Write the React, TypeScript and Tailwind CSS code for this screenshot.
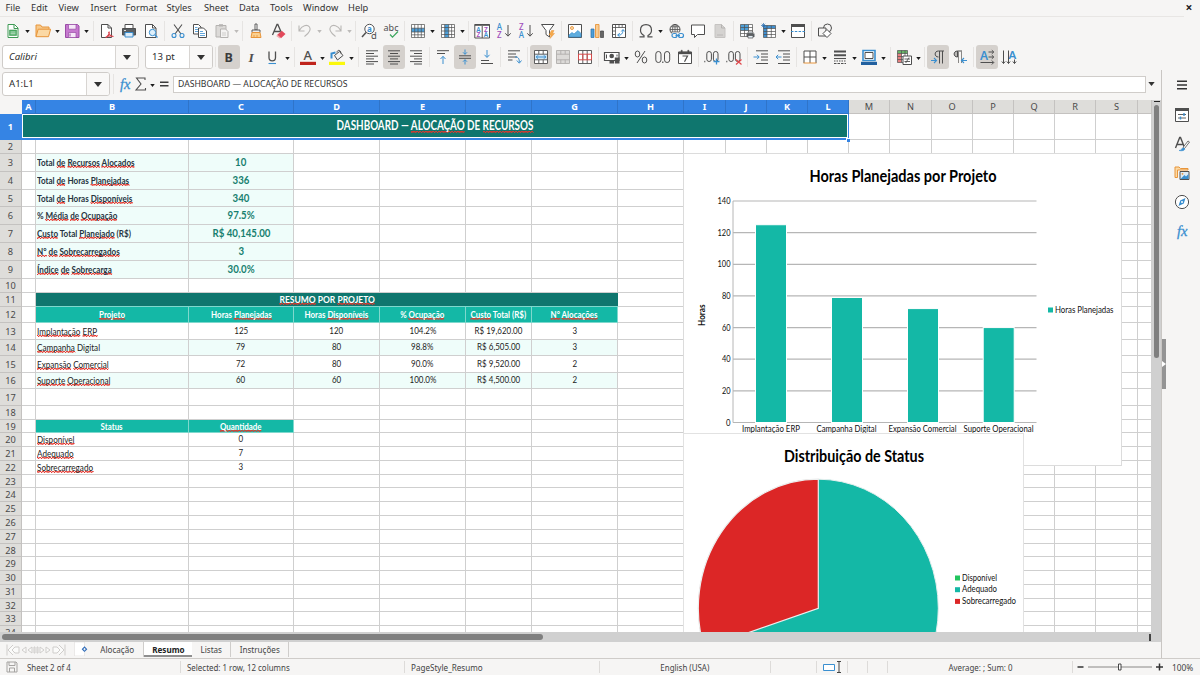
import React from "react";

const UI = "font-['Noto_Sans',sans-serif]";
const CELL = "font-['Lato',sans-serif]";
const G = "#4f4f4f";
const B = "#3a8fd0";
const O = "#e8953a";

/* ---------- icons ---------- */

const icons: Record<string, React.ReactNode> = {
  newDoc: (
    <>
      <path d="M3 1.500h6.500L13 5v9.500H3z" fill="#fff" stroke="#3f9a55" />
      <path d="M9 1.500V5.500h4" stroke="#3f9a55" />
      <path d="M4.500 7h7v5.500h-7z" fill="#4bab63" stroke="#3f9a55" strokeWidth=".6" />
      <path d="M5.500 9h5M5.500 10.800h5" stroke="#fff" strokeWidth=".7" />
    </>
  ),
  open: (
    <>
      <path d="M1 13.500V2h4.500l1.500 2h7v2.500" fill="#f7c98a" stroke={O} />
      <path d="M1 13.700 3.200 6.200H15.600L13.500 13.700z" fill="#fbd9a5" stroke={O} />
    </>
  ),
  save: (
    <>
      <path d="M1.500 1.500h12l1.500 1.500v11.500H1.500z" fill="#c678cf" stroke="#9a4da6" />
      <path d="M4.500 1.500h7.500v4.700H4.500z" fill="#f6e8f8" stroke="#9a4da6" strokeWidth=".7" />
      <path d="M4.500 9.500h7.500v5H4.500z" fill="#f6e8f8" stroke="#9a4da6" strokeWidth=".7" />
      <path d="M6 10.500v3" stroke="#9a4da6" />
    </>
  ),
  pdf: (
    <>
      <path d="M2.500 1.500h6.500L12.500 5v9.500h-10z" fill="#fff" stroke={G} />
      <path d="M9 1.500V5h3.500" stroke={G} />
      <path d="M7 14.500c2.500-2 3.500-4.500 3.200-6M9.500 9c.5 2.500 2 4 5 4.500M6.500 14.500c2-1.500 5-2 8-1" stroke="#d9404a" strokeWidth="1.100" />
    </>
  ),
  print: (
    <>
      <path d="M4 1.500h8v4H4z" fill="#fff" stroke={G} />
      <path d="M1.500 5.500h13v6.500h-13z" fill="#5a5f63" stroke={G} />
      <path d="M4 9.500h8V14H4z" fill="#dcebf7" stroke={B} />
      <path d="M3 7.500h2" stroke="#fff" strokeWidth=".8" />
    </>
  ),
  preview: (
    <>
      <path d="M2.500 1.500h7L13 5v9.500H2.500z" fill="#fff" stroke={G} />
      <path d="M9.500 1.500V5H13" stroke={G} />
      <circle cx="9.500" cy="9.500" r="3.200" fill="#dff0fb" stroke={B} />
      <path d="m12 12 2.500 2.500" stroke={B} strokeWidth="1.300" />
    </>
  ),
  cut: (
    <>
      <path d="M4 1.500 11 11M12 1.500 5 11" stroke={G} strokeWidth="1.100" />
      <circle cx="4" cy="12.500" r="2" stroke={B} strokeWidth="1.100" />
      <circle cx="12" cy="12.500" r="2" stroke={B} strokeWidth="1.100" />
    </>
  ),
  copy: (
    <>
      <path d="M1.500 1.500h5L9 4v7H1.500z" fill="#fff" stroke={G} />
      <path d="M3 4.500h2.500M3 6.500h3M3 8.500h3" stroke={B} strokeWidth=".8" />
      <path d="M6.500 5h5L14.500 8v6.500h-8z" fill="#fff" stroke={G} />
      <path d="M8 8.500h3M8 10.500h5M8 12.500h5" stroke={B} strokeWidth=".8" />
    </>
  ),
  paste: (
    <>
      <path d="M2 2.500h10V14H2z" fill="#dcdad8" stroke="#b5b3b1" />
      <path d="M5 1.200h4v2.300H5z" fill="#b5b3b1" />
      <path d="M6.500 6h5L14 8.500v6H6.500z" fill="#f4f3f2" stroke="#b5b3b1" />
      <path d="M8 10h4M8 12h4" stroke="#c5c3c1" strokeWidth=".8" />
    </>
  ),
  clone: (
    <>
      <path d="M7 1h2v6H7z" fill="#fff" stroke={G} strokeWidth=".9" />
      <path d="M4 7h8v2.500H4z" fill="#ececec" stroke={G} strokeWidth=".9" />
      <path d="M4 9.500h8l1 5H3z" fill="#fbd08f" stroke={O} />
      <path d="M6 14.500V12M9 14.500V12" stroke={O} strokeWidth=".8" />
    </>
  ),
  clear: (
    <>
      <path d="M2.500 12 7 1.500h.8L12 11M4 8.500h6" stroke={G} strokeWidth="1.300" />
      <path d="m7 12 4.800-4.300L15.500 11 11 15.200z" fill="#e2495b" />
      <path d="M6.200 12.900 7.500 11.800l3.200 2.900-1 .9z" fill="#f3a8ae" />
    </>
  ),
  undo: <path d="M2 2.500v5.500h5.500M2.300 7.500C5 2.500 10 1 12.500 4c2 3-1 6.500-5 9.500" stroke="#b9b7b5" strokeWidth="1.100" />,
  redo: <path d="M14 2.500v5.500H8.500M13.700 7.500C11 2.500 6 1 3.500 4c-2 3 1 6.500 5 9.500" stroke="#b9b7b5" strokeWidth="1.100" />,
  find: (
    <>
      <circle cx="8.500" cy="6" r="4.700" fill="#fff" stroke={G} />
      <path d="M5 9.500 1 14" stroke={G} strokeWidth="1.500" />
      <text x="6" y="8.500" fontSize="8" fontWeight="700" fill={B} fontFamily="Noto Sans">a</text>
      <text x="10" y="15.500" fontSize="9.500" fill={G} fontFamily="Noto Sans" stroke="#f6f5f4" strokeWidth="1.500" paintOrder="stroke">d</text>
    </>
  ),
  spell: (
    <>
      <text x=".5" y="7.500" fontSize="9" textLength="15" fill={G} fontFamily="Noto Sans">abc</text>
      <path d="m7 11.500 2.500 2.700L15 8.500" stroke="#3ba55d" strokeWidth="1.200" />
    </>
  ),
  row: (
    <>
      <path d="M1.500 1.500h13v13h-13z" fill="#fff" />
      <path d="M1.500 5.200h13V9h-13z" fill="#4d9fd8" />
      <path d="M1.500 1.500h13v13h-13zM1.500 5.200h13M1.500 9h13M1.500 11.800h13M4.700 1.500v13M8 1.500v13M11.300 1.500v13" stroke={G} strokeWidth=".7" />
    </>
  ),
  col: (
    <>
      <path d="M1.500 1.500h13v13h-13z" fill="#fff" />
      <path d="M4.700 1.500h4v13h-4z" fill="#4d9fd8" />
      <path d="M1.500 1.500h13v13h-13zM1.500 4.500h13M1.500 8h13M1.500 11.500h13M4.700 1.500v13M8.700 1.500v13M11.600 1.500v13" stroke={G} strokeWidth=".7" />
    </>
  ),
  sort: (
    <>
      <path d="M.8 1.500h14.700v13.500H.8z" fill="#fff" stroke={G} />
      <path d="M.8 1h14.700v1.800H.8z" fill={G} />
      <path d="M8.200 3v12" stroke={G} />
      <g fontFamily="Noto Sans" fontSize="6.500" fontWeight="600">
        <text x="2.300" y="8.500" fill={B}>A</text>
        <text x="2.600" y="14.300" fill="#a04dbb">Z</text>
        <text x="10" y="8.500" fill="#a04dbb">Z</text>
        <text x="9.700" y="14.300" fill={B}>A</text>
      </g>
    </>
  ),
  az: (
    <>
      <g fontFamily="Noto Sans" fontSize="8" fontWeight="500">
        <text x=".8" y="6.800" fill={B}>A</text>
        <text x="1" y="15" fill="#a04dbb">Z</text>
      </g>
      <path d="M12 2v11M9.300 10.300 12 13.200l2.700-2.900" stroke={G} />
    </>
  ),
  za: (
    <>
      <g fontFamily="Noto Sans" fontSize="8" fontWeight="500">
        <text x="1" y="6.800" fill="#a04dbb">Z</text>
        <text x=".8" y="15" fill={B}>A</text>
      </g>
      <path d="M12 2v11M9.300 10.300 12 13.200l2.700-2.900" stroke={G} />
    </>
  ),
  filter: (
    <>
      <path d="M1.500 1.500h12.500L9.500 7.500v6.500L6 11.500v-4z" fill="#fff" stroke={G} />
      <path d="m11.500 7.500-2.500 4.500h2l-1 3.500 4.500-5h-2l1.500-3z" fill="#f5a94a" stroke={O} strokeWidth=".5" />
    </>
  ),
  image: (
    <>
      <path d="M1.500 1.500h13v13h-13z" fill="#fff" stroke={G} />
      <circle cx="5" cy="5" r="1.500" fill="#fce0ba" stroke={O} strokeWidth=".9" />
      <path d="M2 14v-2l3-2.500 2 1.500 4-3.500 3 3V14z" fill="#5fadde" stroke={B} strokeWidth=".7" />
    </>
  ),
  chart: (
    <>
      <path d="M2 6h3v8.500H2z" fill="#4d9fd8" stroke="#2a6fa8" strokeWidth=".7" />
      <path d="M6.500 1.500H10v13H6.500z" fill="#f8cc93" stroke={O} strokeWidth=".9" />
      <path d="M11.500 8h3v6.500h-3z" fill="#666" stroke="#444" strokeWidth=".7" />
    </>
  ),
  pivot: (
    <>
      <path d="M1.500 1.500h13v13h-13z" fill="#fff" stroke={G} />
      <path d="M1.500 4.500h13M4.500 1.500v13M8 1.500v3M11.200 1.500v3M1.500 8h3M1.500 11.500h3" stroke={G} strokeWidth=".8" />
      <path d="M7 12c3 .5 5-1.500 5-5M10.300 8.500 12 6.500l1.700 2M8.800 10.300 6.600 12l2 1.700" stroke={B} />
    </>
  ),
  omega: <path d="M1.500 13.800H6v-1.300C3.300 11 2.500 9 2.500 7.200c0-3.500 2.400-5.500 5.500-5.500s5.500 2 5.500 5.500c0 1.800-.8 3.800-3.500 5.300v1.300h4.500" stroke={G} strokeWidth="1.200" />,
  link: (
    <>
      <circle cx="7" cy="6.500" r="5" stroke={G} />
      <path d="M2 6.500h10M7 1.500v10M3 3.800h8M3 9h8" stroke={G} strokeWidth=".8" />
      <ellipse cx="7" cy="6.500" rx="2.400" ry="5" stroke={G} strokeWidth=".8" />
      <path d="M4 9.500h12v6H4z" fill="#f6f5f4" />
      <rect x="4" y="10.500" width="5" height="4" rx="2" stroke={B} strokeWidth="1.200" />
      <rect x="10.500" y="10.500" width="5" height="4" rx="2" stroke={B} strokeWidth="1.200" />
      <path d="M7.500 12.500H12" stroke={B} strokeWidth="1.200" />
    </>
  ),
  comment: <path d="M1.500 2h13v9.500H7.500L4.500 14.500v-3h-3z" fill="#fff" stroke={G} />,
  headfoot: (
    <>
      <path d="M3 1.500h6.500L13 5v9.500H3z" fill="#d5d3d1" stroke="#c6c4c2" />
      <path d="M9.500 1.500V5H13" stroke="#b5b3b1" />
      <path d="M5 12h6" stroke="#b5b3b1" strokeWidth=".8" />
    </>
  ),
  printArea: (
    <>
      <path d="M1.500 1.500h12v12h-12z" fill="#fff" />
      <path d="M1.500 1.500h8v6h-8z" fill="#4d9fd8" />
      <path d="M1.500 1.500h12v12h-12zM1.500 4.500h12M1.500 7.500h12M1.500 10.500h12M5.500 1.500v12M9.500 1.500v12" stroke={G} strokeWidth=".7" />
      <path d="M7.500 10.500h8v3.500h-8z" fill="#5a5f63" />
      <path d="M9 9h5v1.500H9zM9 12.500h5V15H9z" fill="#e4eef6" stroke={G} strokeWidth=".7" />
    </>
  ),
  freeze: (
    <>
      <path d="M2.500 2.500h12v12h-12z" fill="#fff" />
      <path d="M2.500 2.500h12v3h-12zM2.500 2.500h3.500v12H2.500z" fill="#3f8fd0" />
      <path d="M2.500 2.500h12v12h-12zM2.500 5.500h12M2.500 8.500h12M2.500 11.500h12M6 2.500v12M10.300 2.500v12" stroke={G} strokeWidth=".7" />
      <path d="M2.500 0v5M0 2.500h5M.8.8l3.400 3.400M4.200.8.8 4.200" stroke="#2a6fb0" strokeWidth=".7" />
    </>
  ),
  split: (
    <>
      <path d="M1.500 1.500h13v13h-13z" fill="#fff" stroke={G} />
      <path d="M1 1h14v3H1z" fill={G} />
      <path d="M1 8.500h14" stroke={B} strokeDasharray="2.500 1.300" />
    </>
  ),
  shapes: (
    <>
      <circle cx="10.500" cy="5" r="4" stroke={G} />
      <path d="M1.500 5h7.500v8H1.500z" fill="#f6f5f4" stroke={G} />
      <path d="m10 6.500 4 4-4 4-4-4z" fill="#fff" stroke={G} />
    </>
  ),
  bold: <text x="3.500" y="12.700" fontSize="12.500" fontWeight="700" fill="#3b3b3b" fontFamily="Noto Sans">B</text>,
  italic: <text x="5.500" y="12.500" fontSize="13.500" fill={G} fontFamily="Liberation Serif" fontStyle="italic" fontWeight="600">I</text>,
  under: (
    <>
      <path d="M4 2.500v6c0 4.500 6.500 4.500 6.500 0v-6" stroke={G} strokeWidth="1.300" />
      <path d="M3.500 14.500H11" stroke={B} strokeWidth="1.100" />
    </>
  ),
  color: (
    <>
      <text x="3.500" y="11" fontSize="13" fontWeight="500" fill={G} fontFamily="Noto Sans">A</text>
      <path d="M0 12.800h16v3.200H0z" fill="#c0241c" />
    </>
  ),
  highlight: (
    <>
      <path d="m5.500 6.500 5-4 3.500 4-5.500 4.500z" fill="#f2f2f2" stroke={G} />
      <path d="M8 3.500c0-3 4-3 4 1" stroke={G} />
      <path d="M2.500 9.500V4.500l4-1" stroke={B} strokeWidth="2" />
      <path d="M0 12.800h16v3.200H0z" fill="#fbf80c" />
    </>
  ),
  left: <path d="M2 1.800h12M2 4.500h8M2 7.200h12M2 9.900h8M2 12.600h12M2 15h8" stroke={G} />,
  center: <path d="M2 1.800h12M4 4.500h8M2 7.200h12M4 9.900h8M2 12.600h12M4 15h8" stroke={G} />,
  right: <path d="M2 1.800h12M6 4.500h8M2 7.200h12M6 9.900h8M2 12.600h12M6 15h8" stroke={G} />,
  top: (
    <>
      <path d="M2 1.700h12M2 4.500h8" stroke={G} />
      <path d="M8 15V7.500M5.500 10 8 7.300l2.500 2.700" stroke={B} />
    </>
  ),
  middle: (
    <>
      <path d="M2 6.800h12M2 9.300h12" stroke={G} />
      <path d="M8 .5v4.800M6 3.300l2 2 2-2M8 15.500v-4.800M6 12.700l2-2 2 2" stroke={B} />
    </>
  ),
  bottom: (
    <>
      <path d="M2 11.500h8M2 14.500h12" stroke={G} />
      <path d="M8 1v7M5.500 5.800 8 8.500l2.500-2.700" stroke={B} />
    </>
  ),
  wrap: (
    <>
      <path d="M2 1.800h12M2 5h8M2 8h9M2 11h4.500" stroke={G} />
      <path d="M9 8c3-.5 4.500 1.500 4.300 5.500M10.800 11.500l2.500 2.700 2.200-2.700" stroke={B} />
    </>
  ),
  merge: (
    <>
      <path d="M1.500 1.500h13v13h-13z" fill="#fff" />
      <path d="M2 5.500h12v5H2z" fill="#cfe6f6" />
      <path d="M1.500 1.500h13v13h-13zM1.500 5.200h13M1.500 10.800h13M5.800 1.500v3.700M10.200 1.500v3.700M5.800 10.800v3.700M10.200 10.800v3.700" stroke={G} strokeWidth=".9" />
      <path d="M3 8h10M5 6.300 3.300 8 5 9.700M11 6.300 12.700 8 11 9.700" stroke={B} />
    </>
  ),
  mergeCells: (
    <>
      <path d="M1.500 1.500h13v13h-13z" fill="#dcdad8" />
      <path d="M1.500 1.500h13v13h-13zM1.500 5.200h13M1.500 10.800h13M5.800 1.500v3.700M10.200 1.500v3.700M5.800 10.800v3.700M10.200 10.800v3.700" stroke="#b0aeac" strokeWidth=".9" />
    </>
  ),
  unmerge: (
    <>
      <path d="M1.500 1.500h13v13h-13z" fill="#fff" />
      <path d="M1.500 1.500h13v13h-13zM5.800 1.500v13M10.200 1.500v13" stroke={G} strokeWidth=".9" />
      <path d="M1.500 5.200h13v5.600h-13zM5.800 5.200v5.600M10.200 5.200v5.600" stroke="#d84a4a" />
    </>
  ),
  currency: (
    <>
      <path d="M.5 3.500h14.500v8H.5z" fill="#fff" stroke={G} strokeWidth="1.200" />
      <circle cx="7.700" cy="7" r="2.300" fill={G} />
      <path d="M2.500 5.500v4M13 5.500v2" stroke={G} />
      <path d="M5.500 11h4.500v3.500H5.500zM10.800 8.500h4.700v6h-4.700z" fill={G} />
    </>
  ),
  percent: (
    <>
      <ellipse cx="4.500" cy="5" rx="2.300" ry="3" stroke={G} />
      <ellipse cx="11.500" cy="11" rx="2.300" ry="3" stroke={G} />
      <path d="M12 2 4 14" stroke={G} />
    </>
  ),
  number: (
    <>
      <rect x=".8" y="2.500" width="5.200" height="11" rx="2.600" stroke={G} />
      <rect x="9.500" y="2.500" width="5.200" height="11" rx="2.600" stroke={G} />
      <path d="M7.800 12.500v1.500" stroke={G} strokeWidth="1.200" />
    </>
  ),
  date: (
    <>
      <path d="M1.500 3h13v11.500h-13z" fill="#fff" stroke={G} />
      <path d="M1.500 3h13v2h-13zM4 1.200h1.300V4H4zM10.700 1.200H12V4h-1.300z" fill={G} stroke={G} strokeWidth=".4" />
      <path d="M5.500 7h5L7.500 12.800" stroke={G} strokeWidth="1.200" />
    </>
  ),
  addDec: (
    <>
      <path d="M.8 11.800v1.500" stroke={G} />
      <rect x="2.800" y="2.500" width="4.600" height="10" rx="2.300" stroke={G} />
      <rect x="9.400" y="2.500" width="4.600" height="10" rx="2.300" stroke={G} />
      <path d="M12.500 9.500v6M9.500 12.500h6" stroke={B} strokeWidth="1.300" />
    </>
  ),
  delDec: (
    <>
      <path d="M.8 11.800v1.500" stroke={G} />
      <rect x="2.800" y="2.500" width="4.600" height="10" rx="2.300" stroke={G} />
      <rect x="9.400" y="2.500" width="4.600" height="10" rx="2.300" stroke={G} />
      <path d="m10 10.500 5.500 5M15.500 10.500l-5.500 5" stroke="#e0474c" strokeWidth="1.200" />
    </>
  ),
  indent: (
    <>
      <path d="M3 1.800h12M8 5h7M8 8h7M8 11h7M3 14.500h12" stroke={G} />
      <path d="M.5 8H6M4 5.800 6.200 8 4 10.200" stroke={B} />
    </>
  ),
  outdent: (
    <>
      <path d="M3 1.800h12M8 5h7M8 8h7M8 11h7M3 14.500h12" stroke={G} />
      <path d="M1 8h5.500M3.200 5.800 1 8l2.200 2.200" stroke={B} />
    </>
  ),
  borders: (
    <>
      <path d="M2 2h12v12H2z" fill="#fff" />
      <path d="M2 14V2h12v12M8 2v12M2 8h12" stroke={G} />
      <path d="M1.500 14h13" stroke={O} />
    </>
  ),
  lineStyle: (
    <>
      <path d="M2 2.500h12M2 6.300h12" stroke={G} strokeWidth="2" />
      <path d="M2 9.500h12" stroke={G} strokeWidth="1.100" />
      <path d="M2 12h12" stroke={G} strokeDasharray="1.500 1" />
      <path d="M2 14.500h12" stroke={G} strokeDasharray="2.500 1" />
    </>
  ),
  borderColor: (
    <>
      <path d="M2 1.500h12v10H2z" fill="#fff" stroke={B} strokeWidth="1.600" />
      <path d="M4 3.500h8v6H4z" stroke={G} fill="#fff" />
      <path d="M0 12.800h16v3.200H0z" fill="#22609f" />
    </>
  ),
  cond: (
    <>
      <path d="M1.500 1.500h10v12h-10z" fill="#fff" />
      <path d="M1.500 1.500h10v3h-10z" fill="#67b567" />
      <path d="M1.500 4.500h4v9h-4z" fill="#e67f7f" />
      <path d="M1.500 1.500h10v12h-10zM1.500 4.500h10M1.500 7.500h10M1.500 10.500h10M5.500 1.500v12M9 1.500v12" stroke={G} strokeWidth=".7" />
      <path d="M7 7h8.500v8.500H7z" fill="#fff" stroke={G} />
      <path d="M8.500 10h5.500M8.500 12.500h5.500M13 8.500 9.700 14" stroke={G} strokeWidth=".9" />
    </>
  ),
  ltr: (
    <>
      <path d="M14 2H8.500C4 2 4 8 8.500 8M9.500 2v12.500M12.500 2v12.500" stroke={G} />
      <path d="M1 11.500h5.500M4 9l2.500 2.500L4 14" stroke={B} strokeWidth="1.100" />
    </>
  ),
  rtl: (
    <>
      <path d="M10 2H5.500C1 2 1 8 5.500 8V2" fill="#b9b7b5" stroke={G} />
      <path d="M6.500 2v12M9.500 2v12" stroke="#8a8886" />
      <path d="M15 11.500H9.500M12 9l-2.500 2.500L12 14" stroke={B} strokeWidth="1.100" />
    </>
  ),
  textLtr: (
    <>
      <text x="1" y="10.500" fontSize="12" fontWeight="600" fill={B} fontFamily="Noto Sans">A</text>
      <path d="M9.500 3h5M12.800 1.200l2 1.800-2 1.800M9.500 8h5M12.800 6.200l2 1.800-2 1.800M1.500 13.500h13M12.800 11.500l2 2-2 2" stroke={G} />
    </>
  ),
  textTtb: (
    <>
      <text x="7.500" y="9.500" fontSize="11.500" fontWeight="600" fill={B} fontFamily="Noto Sans">A</text>
      <path d="M2.500 1.500v13M.8 12.500l1.700 2 1.700-2M7.500 1.500v13M5.800 12.500l1.700 2 1.700-2M13.500 10.500v4M11.800 12.500l1.700 2 1.700-2" stroke={G} />
    </>
  ),
  properties: (
    <>
      <path d="M1.500 1.500h13v13h-13z" fill="#fff" stroke={G} />
      <path d="M1 1h14v3H1z" fill={G} />
      <path d="M4 7.500h8M4 11h8" stroke={G} strokeWidth=".9" />
      <path d="M10 6v3M6.500 9.500v3" stroke={B} strokeWidth="1.400" />
    </>
  ),
  styles: (
    <>
      <path d="M1.500 12 5.700 1.500h.8l4 10M3 8.500h6" stroke={G} strokeWidth="1.400" />
      <path d="m9 11.500 5-6.500 1.500 1-5 6.500z" fill="#fff" stroke={G} strokeWidth=".8" />
      <path d="M5 14.500c3 0 2.500-3 5-2.500 2 1.500-.5 3.500-5 2.500z" fill={B} stroke={B} strokeWidth=".6" />
    </>
  ),
  gallery: (
    <>
      <path d="M1 12.500V2h4l1.500 1.500h7.500V5H3.500V12.500z" fill="#fbd9a5" stroke={O} />
      <path d="M6 6.500h9v8H6z" fill="#dcebf7" stroke={G} />
      <path d="m6.500 14 4-4 1.500 1.500 2.500-2.500v5z" fill={B} />
      <circle cx="8.500" cy="8.800" r=".9" fill={O} />
    </>
  ),
  navigator: (
    <>
      <circle cx="8" cy="8" r="6.600" fill="#fff" stroke={G} />
      <path d="M11.500 4 9.800 9.500 4.500 12 6.200 6.500z" fill={B} />
      <circle cx="8" cy="8" r="1" fill="#fff" />
    </>
  ),
  fx: (
    <text x="3" y="12.500" fontSize="15.500" fill={B} stroke={B} strokeWidth=".3" fontFamily="Liberation Serif" fontStyle="italic" textLength="10.500" lengthAdjust="spacingAndGlyphs">
      fx
    </text>
  ),
  sigma: <path d="M12 4V2H3.500L8 8l-5 6h9.500v-2" stroke={G} strokeWidth="1.100" />,
  equals: <path d="M4 6.200h8.500M4 9.800h8.500" stroke="#3c3c3c" strokeWidth="1.500" />,
};

function Icon({ name }: { name: string }) {
  return (
    <svg viewBox="0 0 16 16" fill="none" className="h-4 w-4 shrink-0 overflow-visible">
      {icons[name]}
    </svg>
  );
}

/* "v" is a drop-down arrow, "V" a disabled one, "|" a separator, "*" marks a pressed button */
function Tools({ items }: { items: string }) {
  return (
    <>
      {items.split(" ").map((it, i) => {
        if (it === "v" || it === "V")
          return (
            <div key={i} className="flex w-[7.5px] shrink-0 justify-center pt-0.5">
              <svg viewBox="0 0 6 4" className="h-[3px] w-[5px]">
                <path d="M0 0h6L3 4z" fill={it === "v" ? "#1c1c1c" : "#bdbbb9"} />
              </svg>
            </div>
          );
        if (it === "|")
          return (
            <div key={i} className="flex w-[5px] shrink-0 justify-center">
              <div className="h-5 w-px bg-[#e6e4e2]" />
            </div>
          );
        const on = it.startsWith("*");
        return (
          <div
            key={i}
            className={`flex h-6 w-[22px] shrink-0 items-center justify-center rounded-[3px] ${on ? "bg-[#d5d1cd]" : ""}`}
          >
            <Icon name={on ? it.slice(1) : it} />
          </div>
        );
      })}
    </>
  );
}

function Combo({ text, width, italic, arrow }: { text: string; width: string; italic?: boolean; arrow: string }) {
  return (
    <div className={`flex h-6 shrink-0 overflow-hidden rounded-[3px] border border-[#cfccc9] bg-white ${width}`}>
      <div className={`flex flex-1 items-center pl-[6px] text-[9.600px] leading-none text-[#2e2e2e] ${italic ? "italic" : ""}`}>{text}</div>
      <div className={`flex items-center justify-center border-l border-[#d8d5d2] bg-[#f9f8f7] ${arrow}`}>
        <svg viewBox="0 0 8 5" className="h-[5px] w-2">
          <path d="M0 0h8L4 5z" fill="#333" />
        </svg>
      </div>
    </div>
  );
}

/* ---------- sheet ---------- */

const cols: [string, string][] = [
  ["A", "w-[14px]"], ["B", "w-[153px]"], ["C", "w-[105px]"], ["D", "w-[86px]"], ["E", "w-[86px]"],
  ["F", "w-[66px]"], ["G", "w-[86px]"], ["H", "w-[66px]"], ["I", "w-[42px]"], ["J", "w-[41px]"],
  ["K", "w-[41px]"], ["L", "w-[41px]"], ["M", "w-[41px]"], ["N", "w-[42px]"], ["O", "w-[41px]"],
  ["P", "w-[41px]"], ["Q", "w-[41px]"], ["R", "w-[41px]"], ["S", "w-[42px]"], ["", "w-[14px]"],
];

const heights = [
  "h-[26px]", "h-[14px]", "h-[18px]", "h-[18px]", "h-[17px]", "h-[18px]", "h-[18px]", "h-[18px]", "h-[18px]",
  "h-[14px]", "h-[14px]", "h-[16px]", "h-[17px]", "h-[16px]", "h-[17px]", "h-[16px]", "h-[17px]", "h-[14px]",
  "h-[13px]", "h-[14px]", "h-[14px]", "h-[14px]", "h-[13px]", "h-[14px]", "h-[14px]", "h-[14px]", "h-[14px]",
  "h-[13px]", "h-[14px]", "h-[14px]", "h-[14px]", "h-[13px]", "h-[14px]", "h-[14px]",
];

const WAVE =
  "bg-[linear-gradient(45deg,transparent_62%,#e5352c_72%,#e5352c_84%,transparent_92%),linear-gradient(135deg,transparent_4%,#e5352c_12%,#e5352c_20%,transparent_28%),linear-gradient(135deg,transparent_42%,#e5352c_50%,#e5352c_60%,transparent_68%),linear-gradient(45deg,transparent_22%,#e5352c_30%,#e5352c_40%,transparent_50%)] bg-[length:4px_2px] bg-bottom bg-repeat-x";

/* words between underscores carry the spell-check wave */
function Spell({ text }: { text: string }) {
  return (
    <>
      {text.split("_").map((p, i) =>
        i % 2 ? (
          <span key={i} className={WAVE}>
            {p}
          </span>
        ) : (
          <React.Fragment key={i}>{p}</React.Fragment>
        ),
      )}
    </>
  );
}

const kpi: Record<number, [string, string]> = {
  3: ["Total _de_ _Recursos_ _Alocados_", "10"],
  4: ["Total _de_ Horas _Planejadas_", "336"],
  5: ["Total _de_ Horas _Disponíveis_", "340"],
  6: ["% _Média_ _de_ _Ocupação_", "97.5%"],
  7: ["_Custo_ Total _Planejado_ (R$)", "R$ 40,145.00"],
  8: ["_N°_ _de_ _Sobrecarregados_", "3"],
  9: ["_Índice_ _de_ _Sobrecarga_", "30.0%"],
};
const table: Record<number, string[]> = {
  12: ["_Projeto_", "Horas _Planejadas_", "Horas _Disponíveis_", "% _Ocupação_", "_Custo_ Total (R$)", "_N°_ _Alocações_"],
  13: ["_Implantação_ _ERP_", "125", "120", "104.2%", "R$ 19,620.00", "3"],
  14: ["_Campanha_ Digital", "79", "80", "98.8%", "R$ 6,505.00", "3"],
  15: ["_Expansão_ _Comercial_", "72", "80", "90.0%", "R$ 9,520.00", "2"],
  16: ["_Suporte_ _Operacional_", "60", "60", "100.0%", "R$ 4,500.00", "2"],
};
const status: Record<number, [string, string]> = {
  19: ["Status", "_Quantidade_"],
  20: ["_Disponível_", "0"],
  21: ["_Adequado_", "7"],
  22: ["_Sobrecarregado_", "3"],
};

const LABEL = "justify-start pl-[0.5px]";
const MID = "justify-center";
const HEAD = "text-[9.800px] font-bold text-white scale-x-[0.81]";
const TEXT = "text-[9.800px] text-[#1c1c1c] origin-left scale-x-[0.83]";
const NUM = "text-[9.500px] text-[#1c1c1c] scale-x-[0.84]";

function cellContent(row: number, col: number): { box: string; text: string; textCls: string } | null {
  const c = col - 1;
  if (kpi[row] && c >= 0 && c < 2)
    return {
      box: `bg-[#effdfa] ${c ? MID : LABEL}`,
      text: kpi[row][c],
      textCls: c
        ? "text-[11.500px] font-bold text-[#17806f] scale-x-[0.84]"
        : "text-[9.800px] font-bold text-[#26343f] origin-left scale-x-[0.825]",
    };
  if (table[row] && c >= 0 && c < 6) {
    const head = row === 12;
    return {
      box: `${head ? "bg-[#14b8a6] border-[#7fd8cd]" : row % 2 ? "" : "bg-[#effdfa]"} ${head || c ? MID : LABEL}`,
      text: table[row][c],
      textCls: head ? HEAD : c ? NUM : TEXT,
    };
  }
  if (status[row] && c >= 0 && c < 2) {
    const head = row === 19;
    return {
      box: `${head ? "bg-[#14b8a6] border-[#7fd8cd]" : ""} ${head || c ? MID : LABEL}`,
      text: status[row][c],
      textCls: head ? HEAD : c ? NUM : TEXT,
    };
  }
  return null;
}

function Row({ n, h }: { n: number; h: string }) {
  const cells: React.ReactNode[] = [];
  for (let c = 0; c < cols.length; c++) {
    if (n === 1 && c === 0) {
      cells.push(
        <div key="t" className="flex w-[827px] shrink-0 flex-col border-r border-b-2 border-[#3584e4]">
          <div className="flex flex-1 items-center justify-center border border-white bg-[#0f766e]">
            <span className={`${CELL} scale-x-[0.8] text-[12.300px] leading-none font-bold whitespace-nowrap text-white`}>
              <Spell text="DASHBOARD — _ALOCAÇÃO_ DE _RECURSOS_" />
            </span>
          </div>
        </div>,
      );
      c = 11;
      continue;
    }
    if (n === 11 && c === 1) {
      cells.push(
        <div key="r" className="flex w-[582px] shrink-0 items-center justify-center border-b border-[#7fd8cd] bg-[#0f766e]">
          <span className={`${CELL} scale-x-[0.85] pb-0.5 text-[10px] leading-[12px] font-bold whitespace-nowrap text-white`}>
            <Spell text="_RESUMO_ POR _PROJETO_" />
          </span>
        </div>,
      );
      c = 6;
      continue;
    }
    const info = cellContent(n, c);
    cells.push(
      <div
        key={c}
        className={`flex shrink-0 items-center overflow-hidden border-r border-b ${cols[c][1]} ${info ? info.box : ""} ${info && info.box.includes("border-[") ? "" : "border-[#cfcfcf]"}`}
      >
        {info && (
          <span className={`${CELL} shrink-0 pb-px leading-[12px] whitespace-nowrap ${info.textCls}`}>
            <Spell text={info.text} />
          </span>
        )}
      </div>,
    );
  }
  return (
    <div className={`flex shrink-0 ${h}`}>
      <div
        className={`flex w-[22px] shrink-0 items-center justify-center border-r border-b pt-px text-[9.200px] leading-none ${n === 1 ? "border-[#3584e4] bg-[#3584e4] font-bold text-white" : "border-[#c4c2c0] bg-[#deddda] text-[#4a4a4a]"}`}
      >
        {n}
      </div>
      {cells}
    </div>
  );
}

/* ---------- charts ---------- */

const bars: [string, number, number, number, number][] = [
  ["Implantação ERP", 125, 72, 87, 58],
  ["Campanha Digital", 79, 148, 162.5, 60],
  ["Expansão Comercial", 72, 224, 238.5, 68],
  ["Suporte Operacional", 60, 299.7, 314.5, 70],
];

function BarChart() {
  const y = (v: number) => 268.5 - (v * 221.5) / 140;
  return (
    <svg viewBox="0 0 437 311" className={`h-[311px] w-[437px] ${CELL}`} fill="#111">
      <text x="125.500" y="28" fontSize="16.800" fontWeight="700" textLength="187" lengthAdjust="spacingAndGlyphs" fill="#000">
        Horas Planejadas por Projeto
      </text>
      {[0, 20, 40, 60, 80, 100, 120, 140].map((v) => (
        <g key={v}>
          <path d={`M49 ${y(v)}H352.500`} stroke="#b6b6b6" strokeWidth="1.200" />
          <text x={v > 99 ? 33.5 : v ? 38 : 42} y={y(v) + 3} fontSize="9.300" textLength={v > 99 ? 13 : v ? 8.6 : 4.5} lengthAdjust="spacingAndGlyphs">
            {v}
          </text>
        </g>
      ))}
      <path d="M49 47v221.500" stroke="#b6b6b6" />
      {bars.map(([name, v, x, cx, w]) => (
        <g key={name}>
          <rect x={x - 0.5} y={y(v)} width="31" height={268.5 - y(v)} fill="#14b8a6" stroke="#fff" strokeWidth="1" />
          <text x={cx - w / 2} y="278" fontSize="9.500" textLength={w} lengthAdjust="spacingAndGlyphs">
            {name}
          </text>
        </g>
      ))}
      <text transform="translate(21 172) rotate(-90)" fontSize="8.500" fontWeight="700" textLength="21.500" lengthAdjust="spacingAndGlyphs">
        Horas
      </text>
      <path d="M364 153.500h5v5h-5z" fill="#14b8a6" />
      <text x="371" y="158.500" fontSize="9.500" textLength="58.500" lengthAdjust="spacingAndGlyphs">
        Horas Planejadas
      </text>
    </svg>
  );
}

function PieChart() {
  const legend: [string, string, number][] = [
    ["Disponível", "#22c55e", 35],
    ["Adequado", "#14b8a6", 35],
    ["Sobrecarregado", "#dc2626", 54],
  ];
  return (
    <svg viewBox="0 0 339 310" className={`h-[310px] w-[339px] ${CELL}`} fill="#111">
      <text x="100" y="26.500" fontSize="16.800" fontWeight="700" textLength="140" lengthAdjust="spacingAndGlyphs" fill="#000">
        Distribuição de Status
      </text>
      <ellipse cx="134.300" cy="173.200" rx="120" ry="129" fill="#14b8a6" stroke="#e4efee" />
      <path d="M134.300 173.200V44.200A120 129 0 0 0 20.200 213.100z" fill="#dc2626" stroke="#eee" strokeWidth="1.200" />
      {legend.map(([name, fill, w], i) => (
        <g key={name}>
          <path d={`M271 ${140.5 + i * 11.7}h5v5h-5z`} fill={fill} />
          <text x="278" y={145.5 + i * 11.7} fontSize="9.500" textLength={w} lengthAdjust="spacingAndGlyphs">
            {name}
          </text>
        </g>
      ))}
    </svg>
  );
}

/* ---------- page ---------- */

function Left({ children }: { children: React.ReactNode }) {
  return <span className="inline-block origin-left scale-x-[0.88] whitespace-nowrap">{children}</span>;
}
function Mid({ children }: { children: React.ReactNode }) {
  return <span className="inline-block scale-x-[0.88] whitespace-nowrap">{children}</span>;
}

export default function App() {
  return (
    <div className={`flex h-[675px] w-[1200px] flex-col overflow-hidden bg-[#f6f5f4] text-[#333] ${UI}`}>
      <div className="mr-4 flex h-[17px] shrink-0 items-center border-b border-[#e8e6e4] pl-[5.5px] text-[9.300px] leading-none">
        {[
          ["File", "w-[25.5px]"], ["Edit", "w-[27.5px]"], ["View", "w-[32px]"], ["Insert", "w-[35px]"], ["Format", "w-[41px]"],
          ["Styles", "w-[37.5px]"], ["Sheet", "w-[35px]"], ["Data", "w-[31px]"], ["Tools", "w-[33px]"], ["Window", "w-[45px]"], ["Help", "w-[30px]"],
        ].map(([m, w]) => (
          <span key={m} className={`shrink-0 ${w}`}>
            {m}
          </span>
        ))}
        <span className="-mr-[13.5px] ml-auto w-3 text-[12px] leading-none font-bold text-[#222]">×</span>
      </div>

      <div className="flex h-[27px] shrink-0 items-center pl-[2px]">
        <Tools items="newDoc v open v save v | pdf print preview | cut copy paste V | clone clear | undo V redo V | find spell | row v col v | sort az za filter | image chart pivot | omega v link comment headfoot | printArea freeze v split | shapes" />
      </div>

      <div className="flex h-[26px] shrink-0 items-center pl-[2px]">
        <Combo text="Calibri" width="w-[137px]" italic arrow="w-[23px]" />
        <div className="w-[6px] shrink-0" />
        <Combo text="13 pt" width="w-[68px]" arrow="w-[23px]" />
        <div className="flex w-[5px] shrink-0 justify-center">
          <div className="h-5 w-px bg-[#e6e4e2]" />
        </div>
        <Tools items="*bold italic under v | color v highlight v | left *center right | top *middle bottom | wrap | *merge mergeCells unmerge | currency v percent number date | addDec delDec | indent outdent | borders v lineStyle v borderColor v | cond v | *ltr rtl | *textLtr textTtb" />
      </div>

      <div className="flex min-h-0 flex-1">
        <div className="flex w-[1161px] shrink-0 flex-col">
          <div className="flex h-[30px] shrink-0 items-center pb-[2px] pl-[2px]">
            <Combo text="A1:L1" width="w-[108px]" arrow="w-[23px]" />
            <div className="flex w-[7px] shrink-0 justify-center">
              <div className="h-5 w-px bg-[#e6e4e2]" />
            </div>
            <div className="flex w-[56px] shrink-0 items-center">
              <Icon name="fx" />
              <Icon name="sigma" />
              <svg viewBox="0 0 6 4" className="mx-px mt-0.5 h-[3px] w-[5px]">
                <path d="M0 0h6L3 4z" fill="#1c1c1c" />
              </svg>
              <Icon name="equals" />
            </div>
            <div className="flex h-[17px] w-[973px] shrink-0 items-center border border-[#d0cdca] bg-white pl-1 text-[9.500px] leading-none">
              <span className="origin-left scale-x-[0.91] whitespace-nowrap">DASHBOARD — ALOCAÇÃO DE RECURSOS</span>
            </div>
            <svg viewBox="0 0 8 5" className="ml-0.5 h-[4px] w-[7px]">
              <path d="M0 0h8L4 5z" fill="#333" />
            </svg>
          </div>

          <div className="flex h-[532px] shrink-0">
            <div className="relative flex w-[1152px] shrink-0 flex-col overflow-hidden bg-white">
              <div className="flex h-[14px] shrink-0 text-[9.200px] leading-none">
                <div className="w-[22px] shrink-0 bg-[#f6f5f4]" />
                {cols.map(([name, w], i) => (
                  <div
                    key={i}
                    className={`flex shrink-0 items-center justify-center border-r border-b ${w} ${i < 12 ? "border-[#2f74c9] bg-[#3584e4] font-bold text-white" : "border-[#c4c2c0] bg-[#deddda] text-[#4a4a4a]"}`}
                  >
                    {name}
                  </div>
                ))}
              </div>
              {heights.map((h, i) => (
                <Row key={i} n={i + 1} h={h} />
              ))}
              <div className="absolute top-[53px] left-[683px] border border-[#dcdcdc] bg-white">
                <BarChart />
              </div>
              <div className="absolute top-[333px] left-[683px] border border-[#e2e2e2] bg-white pt-px">
                <PieChart />
              </div>
              <div className="absolute top-[38px] left-[846px] h-1 w-1 border-t border-l border-white bg-[#3584e4]" />
            </div>
            <div className="flex w-[9px] shrink-0 flex-col items-center bg-[#d0d0d0]">
              <div className="mt-px h-px w-[6px] bg-[#222]" />
              <div className="mt-[3px] h-[253px] w-[5px] rounded-full bg-[#7f7f7f]" />
            </div>
          </div>

          <div className="flex h-[10px] shrink-0 items-center justify-between bg-[#d0d0d0] pr-[10px] pl-[2px]">
            <div className="h-[6px] w-[541px] rounded-full bg-[#7f7f7f]" />
            <div className="h-[7px] w-[2px] bg-[#444]" />
          </div>

          <div className="flex min-h-0 flex-1 items-stretch pb-px pl-[6px] text-[9.200px] leading-none text-[#444]">
            <svg viewBox="0 0 60 12" className="mt-[2px] h-3 w-[60px] shrink-0" fill="#fbfbfa" stroke="#cfcdcb">
              <path d="M1 .5v11M59 .5v11M7 1 2 6l5 5M9 3 6 6l3 3h4V3zM53 1l5 5-5 5M51 3l3 3-3 3h-4V3z" />
              <path d="m20 3-4 3 4 3zM26 3l-4 3 4 3zM28 3h1v6h-1zM34 3l4 3-4 3zM40 3l4 3-4 3zM31 3h1v6h-1z" />
            </svg>
            <svg viewBox="0 0 14 14" className="ml-2 h-3.5 w-3.5 shrink-0">
              <path d="M.5 0h10v14H.5z" fill="#fff" stroke="#e0dedc" strokeWidth=".6" />
              <path d="M8.500 5.200h4v4h-4z" transform="rotate(45 10.500 7.200)" fill="#2f6bb8" />
              <path d="M10.500 6v2.400M9.300 7.200h2.400" stroke="#fff" strokeWidth=".8" />
            </svg>
            <div className="ml-[3px] flex w-[53px] shrink-0 items-center justify-center border-r border-[#cfcdcb]">
              <Mid>Alocação</Mid>
            </div>
            <div className="flex w-[48px] shrink-0 items-center justify-center border-b-2 border-[#8f8f8f] bg-white pt-0.5 font-bold text-[#222]">
              <Mid>Resumo</Mid>
            </div>
            <div className="flex w-[39px] shrink-0 items-center justify-center border-r border-[#cfcdcb]">
              <Mid>Listas</Mid>
            </div>
            <div className="flex w-[58px] shrink-0 items-center justify-center border-r border-[#cfcdcb]">
              <Mid>Instruções</Mid>
            </div>
          </div>
        </div>

        <div className="flex flex-1 border-l border-[#c9c6c3]">
          <div className="mt-[269px] flex h-[50px] w-[4px] shrink-0 items-center bg-[#949494]">
            <svg viewBox="0 0 4 6" className="h-1.5 w-1">
              <path d="M0 0 4 3 0 6z" fill="#fff" />
            </svg>
          </div>
          <div className="flex flex-1 flex-col items-center gap-[13px] pt-[7px] pr-[2px]">
            <svg viewBox="0 0 16 16" className="mb-px h-4 w-4" stroke="#333" strokeWidth="1.500">
              <path d="M3 4.200h10M3 8h10M3 11.800h10" />
            </svg>
            <Icon name="properties" />
            <Icon name="styles" />
            <Icon name="gallery" />
            <Icon name="navigator" />
            <Icon name="fx" />
          </div>
        </div>
      </div>

      <div className="flex h-[17px] shrink-0 items-center border-t border-[#cfccc9] text-[9px] leading-none text-[#444]">
        <svg viewBox="0 0 12 12" className="ml-[6px] h-3 w-3" fill="none" stroke="#a5a3a1">
          <path d="M1 1h9l1 1v9H1zM3 1v3.500h6V1M3.500 11V7h5v4" />
        </svg>
        <span className="ml-[9px] w-[153px]">
          <Left>Sheet 2 of 4</Left>
        </span>
        <span className="h-3 w-px bg-[#dddbd9]" />
        <span className="w-[223px] pl-[6px]">
          <Left>Selected: 1 row, 12 columns</Left>
        </span>
        <span className="h-3 w-px bg-[#dddbd9]" />
        <span className="w-[194px] pl-[6px]">
          <span className="inline-block origin-left scale-x-[0.9]">PageStyle_Resumo</span>
        </span>
        <span className="h-3 w-px bg-[#dddbd9]" />
        <span className="w-[170px] text-center">
          <Mid>English (USA)</Mid>
        </span>
        <span className="h-3 w-px bg-[#dddbd9]" />
        <span className="w-[45px]" />
        <span className="h-3 w-px bg-[#dddbd9]" />
        <svg viewBox="0 0 30 14" className="h-3.5 w-[30px] shrink-0" fill="none">
          <path d="M6.500 4.500h11v6h-11z" stroke={B} fill="#fff" />
          <path d="M20 1.500h4M20 12.500h4M22 1.500v11" stroke="#444" />
        </svg>
        <span className="h-3 w-px bg-[#dddbd9]" />
        <span className="w-[19px]" />
        <span className="h-3 w-px bg-[#dddbd9]" />
        <span className="w-[19px]" />
        <span className="h-3 w-px bg-[#dddbd9]" />
        <span className="w-[184px] text-center">
          <Mid>Average: ; Sum: 0</Mid>
        </span>
        <span className="h-3 w-px bg-[#dddbd9]" />
        <svg viewBox="0 0 90 12" className="ml-[3px] h-3 w-[90px] shrink-0" fill="none" stroke="#333">
          <path d="M1.500 6h6M80 6h7M83.500 2.500v7" strokeWidth="1.500" />
          <path d="M12 6h64" stroke="#8a8886" />
          <path d="M42.500 3h2.500v6h-2.500z" fill="#fff" strokeWidth=".9" />
        </svg>
        <span className="ml-[6px]">
          <span className="inline-block origin-left scale-x-[0.93]">100%</span>
        </span>
      </div>
    </div>
  );
}
